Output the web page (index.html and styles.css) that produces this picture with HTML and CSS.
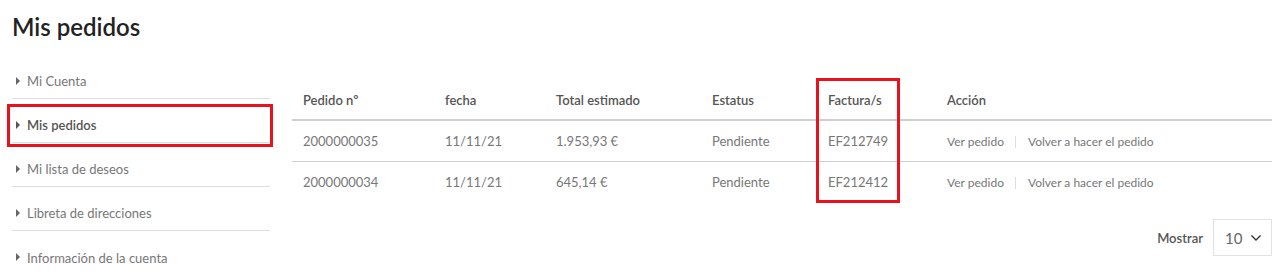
FILE: index.html
```html
<!DOCTYPE html>
<html lang="es">
<head>
<meta charset="utf-8">
<title>Mis pedidos</title>
<link rel="stylesheet" href="styles.css">
</head>
<body>
<h1 class="page-title">Mis pedidos</h1>
<div class="layout">
  <nav class="sidebar">
    <a class="nav-item">Mi Cuenta</a>
    <a class="nav-item nav-current">Mis pedidos</a>
    <a class="nav-item">Mi lista de deseos</a>
    <a class="nav-item">Libreta de direcciones</a>
    <a class="nav-item nav-last">Información de la cuenta</a>
  </nav>
  <div class="content">
    <table class="orders">
      <colgroup>
        <col class="c1"><col class="c2"><col class="c3"><col class="c4"><col class="c5"><col class="c6">
      </colgroup>
      <thead>
        <tr><th>Pedido nº</th><th>fecha</th><th>Total estimado</th><th>Estatus</th><th>Factura/s</th><th>Acción</th></tr>
      </thead>
      <tbody>
        <tr><td>2000000035</td><td>11/11/21</td><td>1.953,93 €</td><td>Pendiente</td><td>EF212749</td>
          <td class="actions"><a>Ver pedido</a><span class="sep"></span><a>Volver a hacer el pedido</a></td></tr>
        <tr><td>2000000034</td><td>11/11/21</td><td>645,14 €</td><td>Pendiente</td><td>EF212412</td>
          <td class="actions"><a>Ver pedido</a><span class="sep"></span><a>Volver a hacer el pedido</a></td></tr>
      </tbody>
    </table>
    <div class="pager">
      <span class="pager-label">Mostrar</span>
      <div class="select"><span>10</span>
        <svg width="12" height="8" viewBox="0 0 12 8"><path d="M1.5 1.5 L6 6 L10.5 1.5" fill="none" stroke="#333" stroke-width="1.3"/></svg>
      </div>
    </div>
  </div>
</div>
<div class="mark mark-nav"></div>
<div class="mark mark-col"></div>
</body>
</html>
```
FILE: styles.css
```css
html, body {
  margin: 0;
  padding: 0;
  background: #fff;
  font-family: Lato, "Open Sans", sans-serif;
  color: #666;
  overflow: hidden;
}
body { position: relative; height: 274px; }
.page-title {
  margin: 0;
  padding: 12px 0 0 12px;
  font-size: 24px;
  line-height: 30px;
  font-weight: 600;
  color: #222;
  height: 43px;
}
.layout {
  display: flex;
  padding-left: 12px;
  gap: 22px;
}
.sidebar {
  width: 258px;
  display: flex;
  flex-direction: column;
}
.nav-item {
  display: flex;
  align-items: center;
  box-sizing: border-box;
  height: 44px;
  padding-top: 9px;
  border-bottom: 1px solid #dedede;
  font-size: 13px;
  color: #777;
  padding-left: 15px;
  position: relative;
}
.nav-item::before {
  content: "";
  position: absolute;
  left: 4px;
  top: 50%;
  margin-top: 0;
  border-left: 4.5px solid #666;
  border-top: 4px solid transparent;
  border-bottom: 4px solid transparent;
}
.nav-current { color: #555; font-weight: 600; }
.nav-current::before { border-left-color: #555; }
.nav-last { border-bottom: none; }
.content {
  width: 980px;
  padding-top: 24px;
}
.orders {
  width: 980px;
  border-collapse: collapse;
  table-layout: fixed;
  font-size: 13px;
}
.c1 { width: 142px; }
.c2 { width: 111px; }
.c3 { width: 156px; }
.c4 { width: 116px; }
.c5 { width: 119px; }
.c6 { width: 336px; }
.orders th {
  text-align: left;
  font-weight: 600;
  color: #555;
  height: 38px;
  padding: 2px 0 0 11px;
  border-bottom: 2px solid #d0d0d0;
}
.orders td {
  height: 40px;
  padding: 0 0 0 11px;
  color: #777;
  border-bottom: 1px solid #d0d0d0;
}
.orders tbody tr:last-child td { border-bottom: none; }
.actions { font-size: 12px; white-space: nowrap; }
.actions a { color: #777; }
.actions .sep {
  display: inline-block;
  width: 1px;
  height: 12px;
  background: #ddd;
  margin: 0 12px 0 11px;
  vertical-align: -2px;
}
.pager {
  display: flex;
  justify-content: flex-end;
  align-items: center;
  gap: 10px;
  margin-top: 17px;
}
.pager-label { font-size: 13px; font-weight: 600; color: #555; }
.select {
  border: 1px solid #e2e2e2;
  display: flex;
  align-items: center;
  justify-content: space-between;
  padding: 0 9px 0 11px;
  box-sizing: border-box;
  width: 59px;
  height: 37px;
  font-size: 15px;
  color: #666;
}
.mark {
  position: absolute;
  border: 3px solid #e8121f;
  box-sizing: border-box;
}
.mark-nav { left: 7px; top: 104px; width: 266px; height: 43px; }
.mark-col { left: 816px; top: 78px; width: 84px; height: 125px; }
```
